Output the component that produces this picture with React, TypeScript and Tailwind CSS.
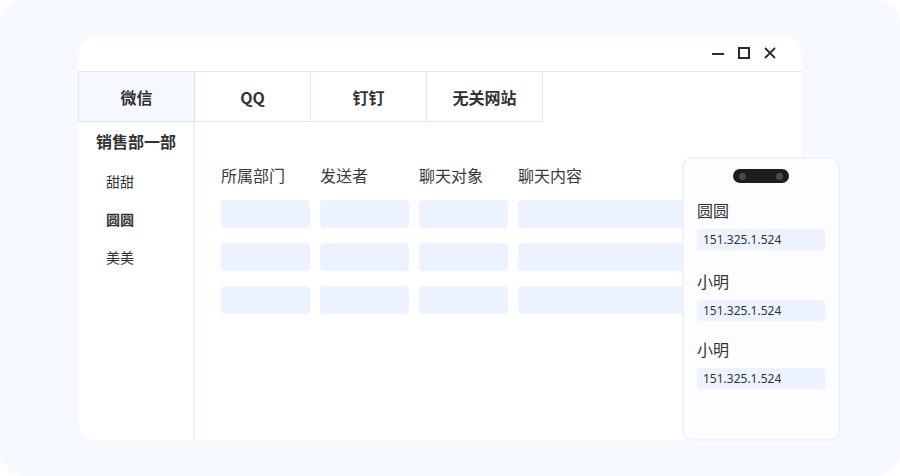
const tabs = ['微信', 'QQ', '钉钉', '无关网站'];
const members = [
  { name: '甜甜', bold: false },
  { name: '圆圆', bold: true },
  { name: '美美', bold: false },
];
const headers = ['所属部门', '发送者', '聊天对象', '聊天内容'];
const online = [
  { name: '圆圆', gap: 'mt-[15px]' },
  { name: '小明', gap: 'mt-[19px]' },
  { name: '小明', gap: 'mt-[16px]' },
];

const App = () => {
  return (
    <div className="w-[900px] h-[476px] bg-white font-['Noto_Sans_CJK_SC','Noto_Sans',sans-serif] text-[#333]">
      <div className="relative w-full h-full rounded-[24px] bg-[#f6f9ff] pt-[35px] pl-[78px]">
        <div className="w-[724px] h-[406px] bg-white rounded-[20px] flex flex-col overflow-hidden">
          {/* title bar */}
          <div className="h-[37px] shrink-0 border-b border-[#e3e9f1] flex items-center justify-end pr-[26px] gap-[14px]">
            <svg width="12" height="12" viewBox="0 0 12 12">
              <path d="M0 7h12" stroke="#2b2b2b" strokeWidth="2" />
            </svg>
            <svg width="12" height="12" viewBox="0 0 12 12">
              <rect x="1" y="1" width="10" height="10" fill="none" stroke="#2b2b2b" strokeWidth="2" />
            </svg>
            <svg width="12" height="12" viewBox="0 0 12 12">
              <path d="M1 1l10 10M11 1L1 11" stroke="#2b2b2b" strokeWidth="1.8" />
            </svg>
          </div>

          {/* tabs */}
          <div className="flex shrink-0">
            {tabs.map((t, i) => (
              <div
                key={t}
                className={`w-[116px] h-[50px] flex items-center justify-center border-b border-r border-[#dfe7f2] text-[16px] font-bold ${
                  i === 0 ? 'bg-[#f5f9ff] border-l w-[117px]' : ''
                }`}
              >
                {t}
              </div>
            ))}
          </div>

          <div className="flex flex-1 min-h-0">
            {/* sidebar */}
            <div className="w-[117px] shrink-0 border-r-2 border-[#eef3fa] flex flex-col pt-[7px] gap-[14px]">
              <div className="pl-[18px] text-[16px] leading-[24px] font-bold mb-[2px]">销售部一部</div>
              {members.map((m) => (
                <div key={m.name} className={`pl-[28px] text-[14px] leading-[24px] ${m.bold ? 'font-bold' : ''}`}>
                  {m.name}
                </div>
              ))}
            </div>

            {/* table */}
            <div className="flex-1 pl-[26px] pt-[41px]">
              <div className="flex gap-[10px] text-[16px] leading-[24px] text-[#3a3a3a]">
                {headers.map((h, i) => (
                  <div key={h} className={i === 3 ? 'flex-1' : 'w-[89px]'}>
                    {h}
                  </div>
                ))}
              </div>
              <div className="flex flex-col gap-[15px] mt-[13px]">
                {[0, 1, 2].map((r) => (
                  <div key={r} className="flex gap-[10px]">
                    <div className="w-[89px] h-[28px] rounded-[4px] bg-[#ecf3fe]" />
                    <div className="w-[89px] h-[28px] rounded-[4px] bg-[#ecf3fe]" />
                    <div className="w-[89px] h-[28px] rounded-[4px] bg-[#ecf3fe]" />
                    <div className="flex-1 h-[28px] rounded-[4px] bg-[#ecf3fe] mr-[10px]" />
                  </div>
                ))}
              </div>
            </div>
          </div>
        </div>

        {/* floating online panel */}
        <div className="absolute left-[682px] top-[157px] w-[158px] h-[284px] rounded-[10px] border-2 border-[#eef3fb] bg-[#fdfdff] flex flex-col px-[13px] pt-[10px]">
          <div className="self-center w-[56px] h-[14px] rounded-full bg-[#1e1e1e] flex items-center justify-between px-[6px]">
            <span className="w-[7px] h-[7px] rounded-full bg-[#4a4a4a]" />
            <span className="w-[7px] h-[7px] rounded-full bg-[#4a4a4a]" />
          </div>
          {online.map((o, i) => (
            <div key={i} className={`flex flex-col ${o.gap}`}>
              <div className="text-[16px] leading-[24px] text-[#333]">{o.name}</div>
              <div className="mt-[7px] w-[128px] h-[21px] rounded-[3px] bg-[#ecf3fe] flex items-center pl-[6px] text-[12px] text-[#333] font-['Noto_Sans',sans-serif]">
                151.325.1.524
              </div>
            </div>
          ))}
        </div>
      </div>
    </div>
  );
};

export default App;
